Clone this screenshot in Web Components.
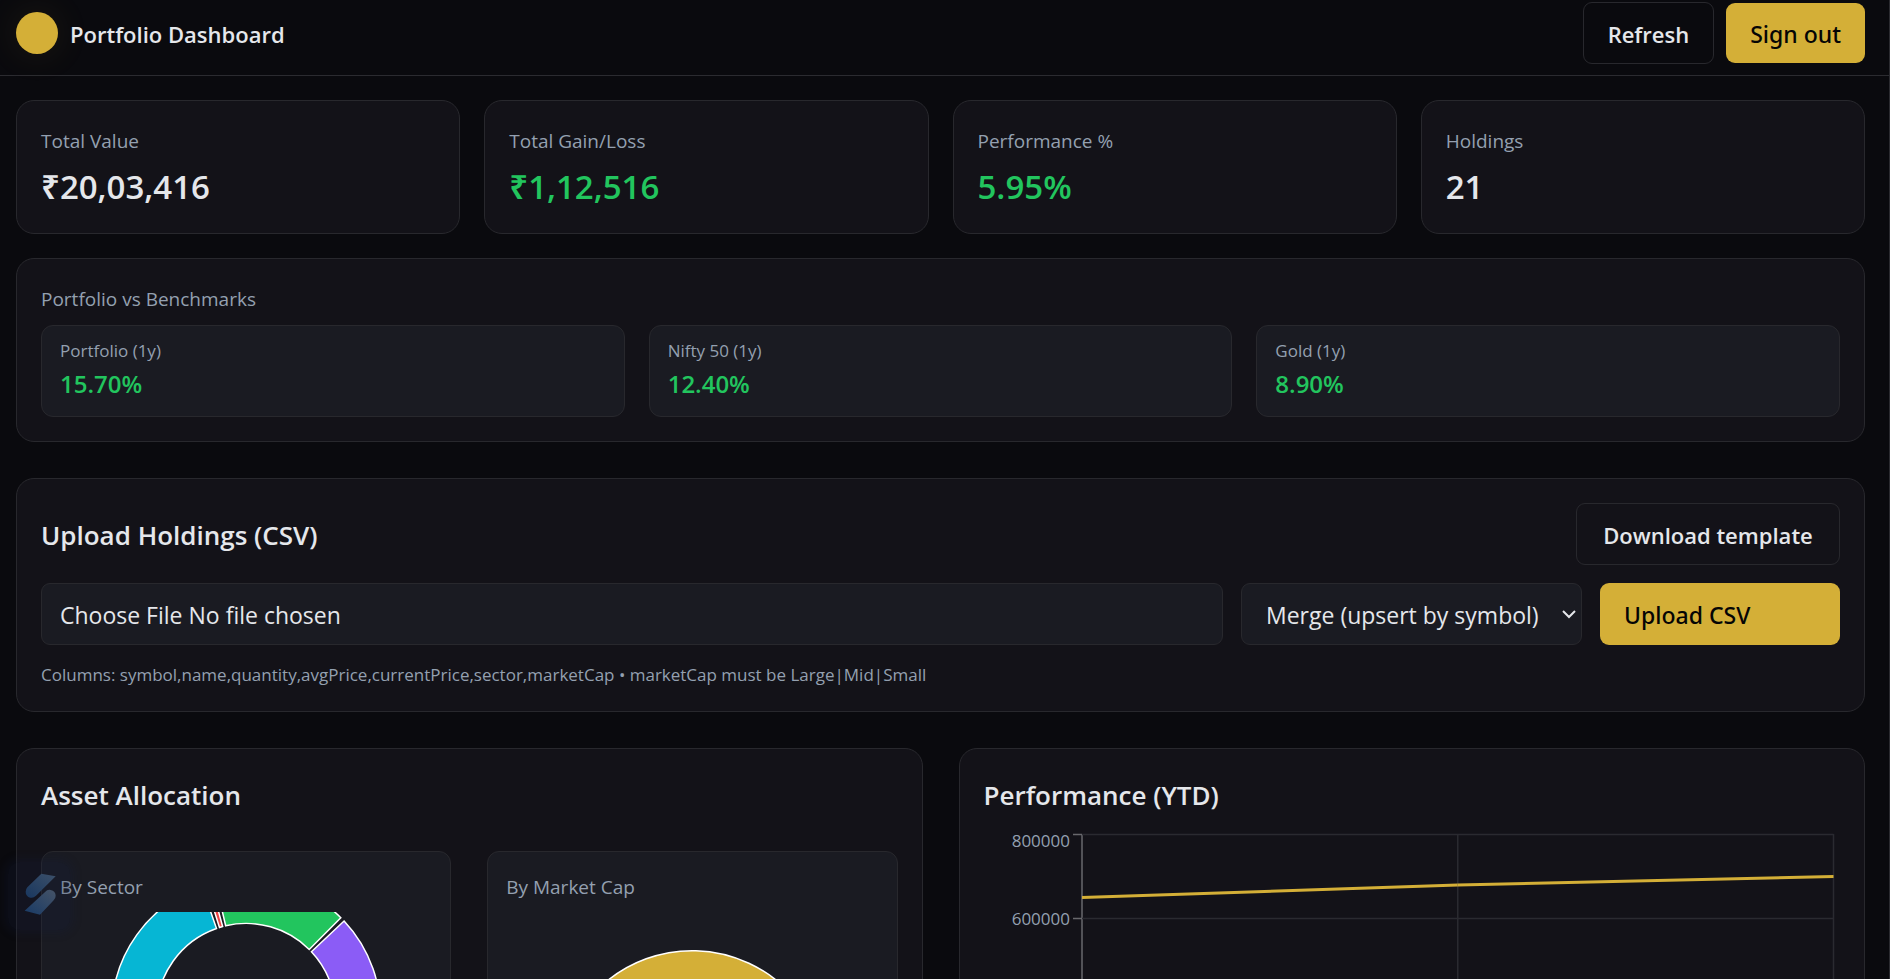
<!DOCTYPE html>
<html lang="en">
<head>
<meta charset="utf-8">
<title>Portfolio Dashboard</title>
<style>
  :root {
    --bg: #0a0a0e; --card: #131218; --inner: #1a1b22; --line: #28282d;
    --text: #e5e7eb; --muted: #94a0b0; --gold: #d4af37; --green: #22c55e;
  }
  html, body { margin: 0; height: 100%; background: var(--bg); }
  body { font-family: "Open Sans", "Noto Sans", sans-serif; color: var(--text); }
</style>
</head>
<body>
<dashboard-app></dashboard-app>
<script>
const define = (name, html, setup) => {
  const template = document.createElement('template');
  template.innerHTML = `<style>*{box-sizing:border-box}:host{box-sizing:border-box}</style>${html}`;
  customElements.define(name, class extends HTMLElement {
    connectedCallback() {
      if (this.shadowRoot) return;
      this.attachShadow({ mode: 'open' }).append(template.content.cloneNode(true));
      if (setup) setup(this, this.shadowRoot);
    }
  });
};

define('ui-button', `
<style>
  :host { display: block; }
  button { display: block; width: 100%; padding: 13px 24px 11px; border: 0; border-radius: 9px;
    background: var(--gold); color: #050505; font: 500 23px/36px "Noto Sans", sans-serif; text-align: left; white-space: nowrap; }
  :host([variant=outline]) button { background: transparent; color: var(--text); text-align: center;
    border: 1px solid var(--line); font: 600 22px/36px "Open Sans", sans-serif; }
  :host([tall]) button { padding-block: 14px 12px; }
</style>
<button type="button"><slot></slot></button>`);

define('app-header', `
<style>
  :host { display: flex; align-items: center; justify-content: space-between;
    padding: 2px 24px 11px 16px; border-bottom: 1px solid #2b2b30; }
  .brand, .actions { display: flex; align-items: center; gap: 12px; }
  .dot { width: 42px; height: 42px; border-radius: 50%; background: var(--gold);
    box-shadow: 0 0 36px rgba(212,175,55,.1); }
  h1 { margin: 0; padding-top: 2px; font-size: 22px; font-weight: 600; line-height: 36px; }
</style>
<div class="brand"><span class="dot"></span><h1>Portfolio Dashboard</h1></div>
<div class="actions"><ui-button variant="outline">Refresh</ui-button><ui-button>Sign out</ui-button></div>`);

define('ui-card', `
<style>
  :host { display: block; min-width: 0; padding: 24px; border: 1px solid var(--line);
    border-radius: 18px; background: var(--card); }
</style>
<slot></slot>`);

define('ui-stat', `
<style>
  .label { font-size: 19px; line-height: 32px; color: var(--muted); }
  .value { margin-top: 8px; font-size: 33px; font-weight: 600; line-height: 44px; }
  :host([gain]) .value { color: var(--green); }
</style>
<ui-card><div class="label"><slot name="label"></slot></div><div class="value"><slot></slot></div></ui-card>`);

define('bench-tile', `
<style>
  :host { display: block; padding: 12px 18px; border: 1px solid var(--line); border-radius: 12px; background: var(--inner); }
  .label { font-size: 17px; line-height: 26px; color: var(--muted); }
  .value { font-size: 24px; font-weight: 600; line-height: 40px; color: var(--green); }
</style>
<div class="label"><slot name="label"></slot></div><div class="value"><slot></slot></div>`);

define('bench-panel', `
<style>
  h2 { margin: 0 0 10px; font-size: 19px; font-weight: 400; line-height: 32px; color: var(--muted); }
  .row { display: grid; grid-template-columns: repeat(3, 1fr); gap: 24px; }
</style>
<ui-card>
  <h2>Portfolio vs Benchmarks</h2>
  <div class="row">
    <bench-tile><span slot="label">Portfolio (1y)</span>15.70%</bench-tile>
    <bench-tile><span slot="label">Nifty 50 (1y)</span>12.40%</bench-tile>
    <bench-tile><span slot="label">Gold (1y)</span>8.90%</bench-tile>
  </div>
</ui-card>`);

define('upload-panel', `
<style>
  .head { display: flex; align-items: center; justify-content: space-between; margin-bottom: 18px; }
  .head ui-button { width: 264px; }
  h2 { margin: 0; padding-top: 2px; font-size: 26px; font-weight: 600; line-height: 42px; }
  form { display: grid; grid-template-columns: 1fr 341px 240px; gap: 18px; }
  input, select { display: block; width: 100%; height: 62px; margin: 0; border: 1px solid var(--line); border-radius: 9px;
    background: var(--inner); color: var(--text); font: 400 23px/36px "Open Sans", sans-serif; }
  input { padding: 13px 18px 11px; }
  input::file-selector-button { margin: 0 6px 0 0; padding: 0; border: 0; background: none; color: inherit; font: inherit; }
  .pick { position: relative; }
  select { appearance: none; padding: 13px 24px 11px; }
  .pick svg { position: absolute; right: 6px; top: 27px; width: 14px; height: 9px; pointer-events: none; }
  p { margin: 18px 0 0; font-size: 17px; line-height: 24px; color: var(--muted); }
</style>
<ui-card>
  <div class="head"><h2>Upload Holdings (CSV)</h2><ui-button variant="outline">Download template</ui-button></div>
  <form>
    <input type="file" aria-label="Holdings CSV file">
    <div class="pick">
      <select aria-label="Import mode"><option>Merge (upsert by symbol)</option></select>
      <svg viewBox="0 0 14 9" fill="none" stroke="#e5e7eb" stroke-width="2"><path d="M1 1l6 6 6-6"/></svg>
    </div>
    <ui-button tall>Upload CSV</ui-button>
  </form>
  <p>Columns: symbol,name,quantity,avgPrice,currentPrice,sector,marketCap • marketCap must be Large|Mid|Small</p>
</ui-card>`);

/* Donut and pie charts: slices are "start,end,colour" in degrees, counter-clockwise from the right. */
const arcPath = (start, end, inner, outer) => {
  const at = (deg, r) => `${(r * Math.cos(deg * Math.PI / 180)).toFixed(2)} ${(-r * Math.sin(deg * Math.PI / 180)).toFixed(2)}`;
  const large = end - start > 180 ? 1 : 0;
  return `M${at(start, outer)}A${outer} ${outer} 0 ${large} 0 ${at(end, outer)}` +
    (inner ? `L${at(end, inner)}A${inner} ${inner} 0 ${large} 1 ${at(start, inner)}Z` : 'L0 0Z');
};
define('pie-chart', `
<style>
  :host { display: block; padding: 18px; border: 1px solid var(--line); border-radius: 12px; background: var(--inner); }
  h3 { margin: 0 0 7px; font-size: 19px; font-weight: 400; line-height: 35px; color: var(--muted); }
  svg { display: block; width: 100%; overflow: hidden; }
</style>
<h3><slot></slot></h3>
<svg stroke="#fff" stroke-width="1.5" role="img"></svg>`, (host, root) => {
  const svg = root.querySelector('svg');
  const height = Number(host.getAttribute('height'));
  svg.setAttribute('viewBox', `-187 ${-height / 2} 374 ${height}`);
  svg.style.height = height + 'px';
  svg.innerHTML = host.getAttribute('slices').split(' ').map(s => {
    const [a, b, colour] = s.split(',');
    return `<path fill="${colour}" d="${arcPath(+a, +b, +host.getAttribute('inner'), 135)}"/>`;
  }).join('');
});

define('allocation-panel', `
<style>
  h2 { margin: 0 0 34px; font-size: 26px; font-weight: 600; line-height: 44px; }
  .row { display: grid; grid-template-columns: 1fr 1fr; gap: 36px; }
</style>
<ui-card>
  <h2>Asset Allocation</h2>
  <div class="row">
    <pie-chart height="202" inner="90" slices="45.2,103.2,#22c55e 105.2,107.3,#ef4444 109.3,250,#06b6d4 252,300,#d4af37 302,403.2,#8b5cf6">By Sector</pie-chart>
    <pie-chart height="346" inner="0" slices="20,200,#d4af37 200,300,#22c55e 300,380,#06b6d4">By Market Cap</pie-chart>
  </div>
</ui-card>`);

define('performance-panel', `
<style>
  h2 { margin: 0 0 10px; font-size: 26px; font-weight: 600; line-height: 44px; }
  .chart { display: grid; grid-template-columns: 98px 1fr; padding-right: 7px; }
  svg { display: block; width: 100%; height: 360px; overflow: visible; }
  text { font-size: 17px; fill: var(--muted); text-anchor: end; }
</style>
<ui-card>
  <h2>Performance (YTD)</h2>
  <div class="chart">
    <svg>
      <g stroke="#68686c" stroke-width="1.5"><path d="M98 7V344M89 7.500h9M89 91.500h9M89 175.500h9M89 259.500h9M89 343.500h9"/></g>
      <text x="86" y="20">800000</text><text x="86" y="98">600000</text>
    </svg>
    <svg>
      <g stroke="#2a2a30" stroke-width="1.5">
        <line x1="0" x2="100%" y1="7.500" y2="7.500"/><line x1="0" x2="100%" y1="91.500" y2="91.500"/>
        <line x1="0" x2="100%" y1="175.500" y2="175.500"/><line x1="0" x2="100%" y1="259.500" y2="259.500"/>
        <line x1="50%" x2="50%" y1="7" y2="343"/><line x1="100%" x2="100%" y1="7" y2="343"/>
      </g>
      <g stroke="#d4af37" stroke-width="3">
        <line x1="0" y1="70.500" x2="50%" y2="58"/><line x1="50%" y1="58" x2="100%" y2="49.500"/>
      </g>
    </svg>
  </div>
</ui-card>`);

define('corner-badge', `
<style>
  :host { position: absolute; left: 8px; bottom: 49px; width: 62px; height: 68px; border-radius: 12px;
    background: rgba(20,32,66,.2); box-shadow: 0 0 8px 4px rgba(20,32,66,.2); pointer-events: none; }
  svg { display: block; margin: 11px 0 0 16px; width: 32px; height: 42px; }
</style>
<svg viewBox="0 0 96 126" role="img" aria-label="Assistant">
  <defs>
    <linearGradient id="a" x1="1" y1="0" x2="0" y2="1"><stop stop-color="#3c5069"/><stop offset="1" stop-color="#19375f"/></linearGradient>
    <linearGradient id="b" x1="1" y1="0" x2="0" y2="1"><stop stop-color="#455367"/><stop offset="1" stop-color="#183a66"/></linearGradient>
  </defs>
  <path fill="url(#a)" d="M52 2L95 10L36 68Q28 76 19 74Q5 70 5 56Q5 49 10 43Z"/>
  <path fill="url(#b)" d="M64 56Q70 49 80 51Q95 55 95 68Q95 76 89 82L48 125L2 113Z"/>
</svg>`);

define('dashboard-app', `
<style>
  :host { display: block; position: relative; height: 100vh; overflow: hidden; border-right: 1px solid #2b2b30; }
  .scroll { height: 100%; overflow-y: auto; scrollbar-width: none; }
  main { display: grid; grid-template-columns: minmax(0, 1fr); gap: 36px; padding: 24px 24px 24px 16px; }
  .top { display: grid; gap: 24px; }
  .stats { display: grid; grid-template-columns: repeat(4, 1fr); gap: 24px; }
  .charts { display: grid; grid-template-columns: 1fr 1fr; gap: 36px; align-items: start; }
  .charts > * { min-width: 0; }
</style>
<div class="scroll">
  <app-header></app-header>
  <main>
    <div class="top">
      <div class="stats">
        <ui-stat><span slot="label">Total Value</span>₹20,03,416</ui-stat>
        <ui-stat gain><span slot="label">Total Gain/Loss</span>₹1,12,516</ui-stat>
        <ui-stat gain><span slot="label">Performance %</span>5.95%</ui-stat>
        <ui-stat><span slot="label">Holdings</span>21</ui-stat>
      </div>
      <bench-panel></bench-panel>
    </div>
    <upload-panel></upload-panel>
    <div class="charts">
      <allocation-panel></allocation-panel>
      <performance-panel></performance-panel>
    </div>
  </main>
</div>
<corner-badge></corner-badge>`);
</script>
</body>
</html>
